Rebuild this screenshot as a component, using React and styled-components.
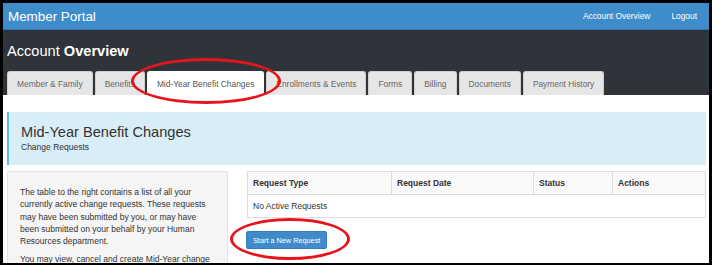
import React from "react";
import styled, { createGlobalStyle } from "styled-components";

const GlobalStyle = createGlobalStyle`
  html, body {
    margin: 0;
    padding: 0;
    background: #ffffff;
  }
  body {
    font-family: "Liberation Sans", Arial, sans-serif;
    color: #333333;
  }
  * {
    box-sizing: border-box;
  }
`;

const tabs = [
  "Member & Family",
  "Benefits",
  "Mid-Year Benefit Changes",
  "Enrollments & Events",
  "Forms",
  "Billing",
  "Documents",
  "Payment History",
];

const columns = [
  { label: "Request Type", width: "144px" },
  { label: "Request Date", width: "142px" },
  { label: "Status", width: "79px" },
  { label: "Actions", width: "auto" },
];

const App = () => {
  return (
    <>
      <GlobalStyle />
      <Frame>
        <Navbar>
          <Brand>Member Portal</Brand>
          <NavLinks>
            <NavLink>Account Overview</NavLink>
            <NavLink>Logout</NavLink>
          </NavLinks>
        </Navbar>

        <Header>
          <PageTitle>
            Account <strong>Overview</strong>
          </PageTitle>
          <TabList>
            {tabs.map((tab) => (
              <Tab key={tab} $active={tab === "Mid-Year Benefit Changes"}>
                {tab}
              </Tab>
            ))}
          </TabList>
        </Header>

        <Content>
          <Callout>
            <CalloutTitle>Mid-Year Benefit Changes</CalloutTitle>
            <CalloutSub>Change Requests</CalloutSub>
          </Callout>

          <Columns>
            <Well>
              <p>
                The table to the right contains a list of all your currently
                active change requests. These requests may have been submitted
                by you, or may have been submitted on your behalf by your Human
                Resources department.
              </p>
              <p>
                You may view, cancel and create Mid-Year change requests from
                this page.
              </p>
            </Well>

            <div>
              <Table>
                <thead>
                  <tr>
                    {columns.map((col) => (
                      <Th key={col.label} style={{ width: col.width }}>
                        {col.label}
                      </Th>
                    ))}
                  </tr>
                </thead>
                <tbody>
                  <tr>
                    <Td colSpan={4}>No Active Requests</Td>
                  </tr>
                </tbody>
              </Table>
              <PrimaryButton>Start a New Request</PrimaryButton>
            </div>
          </Columns>
        </Content>

        {/* hand-drawn annotation marks over the screenshot */}
        <Annotation $left={128} $top={55} $width={150} $height={46} />
        <Annotation $left={227} $top={215} $width={120} $height={42} />
      </Frame>
    </>
  );
};

const Frame = styled.div`
  position: relative;
  width: 712px;
  height: 265px;
  overflow: hidden;
  border: 3px solid #000000;
  border-bottom-width: 2px;
  background: #ffffff;
`;

const Navbar = styled.div`
  display: flex;
  align-items: center;
  justify-content: space-between;
  height: 27px;
  padding: 0 12px 0 5px;
  background: #3f8ccb;
  border-bottom: 1px solid #3577ad;
`;

const Brand = styled.div`
  color: #ffffff;
  font-size: 13.4px;
`;

const NavLinks = styled.div`
  display: flex;
  gap: 21px;
`;

const NavLink = styled.span`
  color: #ffffff;
  font-size: 8.4px;
`;

const Header = styled.div`
  background: #2f333a;
  padding: 12px 0 0 4px;
`;

const PageTitle = styled.h1`
  margin: 0 0 11px;
  color: #ffffff;
  font-size: 14.6px;
  font-weight: normal;
  line-height: 18px;

  strong {
    font-weight: bold;
  }
`;

const TabList = styled.div`
  display: flex;
  gap: 2px;
  height: 24px;
`;

const Tab = styled.div`
  display: flex;
  align-items: center;
  padding: 0 9px;
  font-size: 8.4px;
  color: ${(p) => (p.$active ? "#555555" : "#666666")};
  background: ${(p) => (p.$active ? "#ffffff" : "#e6e6e6")};
  border: 1px solid ${(p) => (p.$active ? "#ffffff" : "#cfcfcf")};
  border-bottom: none;
  border-radius: 3px 3px 0 0;
  white-space: nowrap;
`;

const Content = styled.div`
  padding: 17px 3px 0 4px;
`;

const Callout = styled.div`
  height: 53px;
  padding: 12px 12px 0;
  background: #d9edf7;
  border-left: 2px solid #5bbcdd;
`;

const CalloutTitle = styled.div`
  font-size: 14.6px;
  line-height: 17px;
  color: #333333;
`;

const CalloutSub = styled.div`
  font-size: 8.5px;
  line-height: 12px;
  color: #333333;
`;

const Columns = styled.div`
  display: grid;
  grid-template-columns: 221px 1fr;
  column-gap: 19px;
  margin-top: 6px;
`;

const Well = styled.div`
  height: 120px;
  padding: 14px 12px;
  background: #f5f5f5;
  border: 1px solid #e3e3e3;
  font-size: 8.5px;
  line-height: 12.25px;
  color: #333333;

  p {
    margin: 0 0 6px;
  }
`;

const Table = styled.table`
  width: 100%;
  border-collapse: collapse;
  table-layout: fixed;
  font-size: 8.5px;
  color: #333333;
`;

const Th = styled.th`
  height: 23px;
  padding: 0 5px;
  text-align: left;
  font-weight: bold;
  background: #f9f9f9;
  border: 1px solid #dddddd;
`;

const Td = styled.td`
  height: 23px;
  padding: 0 5px;
  border: 1px solid #dddddd;
`;

const PrimaryButton = styled.button`
  display: block;
  margin: 13px 0 0 -1px;
  height: 18px;
  padding: 0 6px;
  font-family: "Liberation Sans", Arial, sans-serif;
  font-size: 7.3px;
  color: #ffffff;
  background: #428bca;
  border: 1px solid #357ebd;
  border-radius: 2px;
`;

const Annotation = styled.div`
  position: absolute;
  left: ${(p) => p.$left}px;
  top: ${(p) => p.$top}px;
  width: ${(p) => p.$width}px;
  height: ${(p) => p.$height}px;
  border: 3.5px solid #e8141b;
  border-radius: 50%;
  pointer-events: none;
`;

export default App;
